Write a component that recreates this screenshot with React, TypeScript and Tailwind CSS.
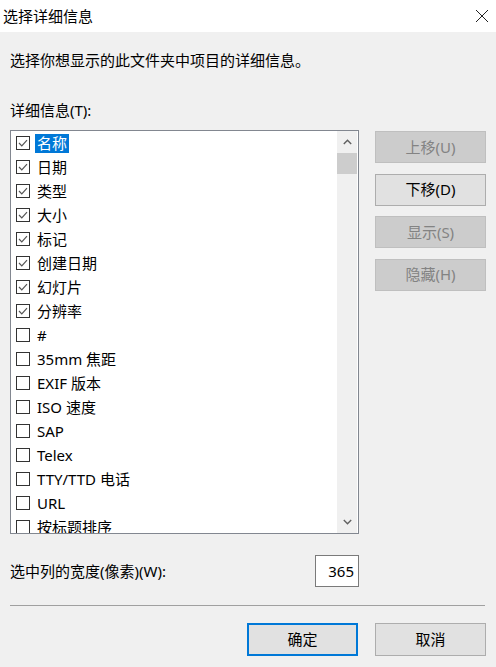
import React from 'react';

interface Item {
  label: string;
  checked: boolean;
}

const items: Item[] = [
  { label: '名称', checked: true },
  { label: '日期', checked: true },
  { label: '类型', checked: true },
  { label: '大小', checked: true },
  { label: '标记', checked: true },
  { label: '创建日期', checked: true },
  { label: '幻灯片', checked: true },
  { label: '分辨率', checked: true },
  { label: '#', checked: false },
  { label: '35mm 焦距', checked: false },
  { label: 'EXIF 版本', checked: false },
  { label: 'ISO 速度', checked: false },
  { label: 'SAP', checked: false },
  { label: 'Telex', checked: false },
  { label: 'TTY/TTD 电话', checked: false },
  { label: 'URL', checked: false },
  { label: '按标题排序', checked: false },
];

const font = { fontFamily: '"Noto Sans", "Noto Sans CJK SC", sans-serif' };

const CheckBox: React.FC<{ checked: boolean }> = ({ checked }) => (
  <div className="w-[14px] h-[14px] border border-[#333333] bg-white flex items-center justify-center shrink-0">
    {checked && (
      <svg width="10" height="8" viewBox="0 0 10 8">
        <path d="M1 4 L3.8 6.8 L9 1.2" fill="none" stroke="#555555" strokeWidth="1.2" />
      </svg>
    )}
  </div>
);

const SideButton: React.FC<{ label: string; disabled?: boolean }> = ({ label, disabled }) => (
  <button
    className={
      disabled
        ? 'w-[111px] h-[32px] bg-[#cccccc] border border-[#bfbfbf] text-[#838383] text-[15px]'
        : 'w-[111px] h-[32px] bg-[#e1e1e1] border border-[#adadad] text-black text-[15px]'
    }
  >
    {label}
  </button>
);

const DetailsList: React.FC = () => (
  <div className="w-[349px] h-[404px] border border-[#828790] bg-white flex overflow-hidden">
    <div className="flex-1 overflow-hidden">
      {items.map((item, i) => (
        <div key={item.label} className="h-[24px] flex items-center pl-[5px] gap-[5px] shrink-0">
          <CheckBox checked={item.checked} />
          <span
            className={
              i === 0
                ? 'bg-[#0078d7] text-white px-[2px] h-[19px] leading-[19px] text-[15px]'
                : 'px-[2px] text-black text-[15px] leading-[19px]'
            }
          >
            {item.label}
          </span>
        </div>
      ))}
    </div>
    <div className="w-[20px] mr-[1px] bg-[#f0f0f0] flex flex-col">
      <div className="h-[22px] flex items-center justify-center">
        <svg width="9" height="6" viewBox="0 0 9 6">
          <path d="M0.8 5 L4.5 1.3 L8.2 5" fill="none" stroke="#606060" strokeWidth="1.4" />
        </svg>
      </div>
      <div className="h-[21px] bg-[#cdcdcd]" />
      <div className="flex-1" />
      <div className="h-[22px] flex items-center justify-center">
        <svg width="9" height="6" viewBox="0 0 9 6">
          <path d="M0.8 1 L4.5 4.7 L8.2 1" fill="none" stroke="#606060" strokeWidth="1.4" />
        </svg>
      </div>
    </div>
  </div>
);

const App: React.FC = () => {
  return (
    <div className="w-[496px] h-[667px] bg-[#f0f0f0] flex flex-col text-black" style={font}>
      <div className="h-[32px] bg-white flex items-center justify-between pl-[3px] pr-[7px]">
        <span className="text-[15px]">选择详细信息</span>
        <svg width="14" height="14" viewBox="0 0 14 14">
          <path d="M1 1 L13 13 M13 1 L1 13" stroke="#222222" strokeWidth="1" />
        </svg>
      </div>
      <div className="px-[10px] flex flex-col">
        <p className="mt-[18px] h-[20px] leading-[20px] text-[15px]">选择你想显示的此文件夹中项目的详细信息。</p>
        <p className="mt-[30px] h-[20px] leading-[20px] text-[15px]">详细信息(T):</p>
        <div className="mt-[10px] flex gap-[16px]">
          <DetailsList />
          <div className="flex flex-col gap-[10.5px] pt-[1px]">
            <SideButton label="上移(U)" disabled />
            <SideButton label="下移(D)" />
            <SideButton label="显示(S)" disabled />
            <SideButton label="隐藏(H)" disabled />
          </div>
        </div>
        <div className="mt-[21px] w-[349px] flex items-center justify-between">
          <span className="text-[15px]">选中列的宽度(像素)(W):</span>
          <div className="w-[44px] h-[32px] bg-white border border-[#7a7a7a] flex items-center justify-end pr-[4px] text-[15px]">
            365
          </div>
        </div>
        <div className="mt-[18px] w-[475px] h-px bg-[#a0a0a0]" />
        <div className="mt-[17px] w-[476px] flex justify-end gap-[17px]">
          <button className="w-[111px] h-[33px] bg-[#e1e1e1] border-2 border-[#0078d7] text-[15px]">确定</button>
          <button className="w-[111px] h-[33px] bg-[#e1e1e1] border border-[#adadad] text-[15px]">取消</button>
        </div>
      </div>
    </div>
  );
};

export default App;
